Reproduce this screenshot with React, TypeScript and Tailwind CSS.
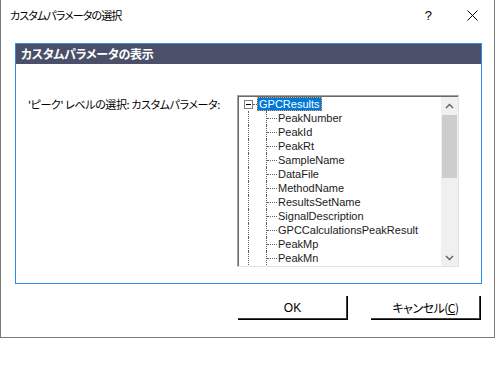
import React from "react";

const jp = "font-['Noto_Sans_CJK_JP',sans-serif] [font-feature-settings:'palt']";
const latin = "font-['Liberation_Sans','Noto_Sans_CJK_JP',sans-serif]";

const children = [
  "PeakNumber",
  "PeakId",
  "PeakRt",
  "SampleName",
  "DataFile",
  "MethodName",
  "ResultsSetName",
  "SignalDescription",
  "GPCCalculationsPeakResult",
  "PeakMp",
  "PeakMn",
];

function Chevron({ up }: { up?: boolean }) {
  return (
    <svg width="9" height="6" viewBox="0 0 9 6">
      <path
        d={up ? "M1 5 L4.5 1.5 L8 5" : "M1 1 L4.5 4.5 L8 1"}
        fill="none"
        stroke="#606060"
        strokeWidth="1.4"
      />
    </svg>
  );
}

export default function App() {
  return (
    <div className="w-[497px] h-[366px] bg-white overflow-hidden">
      <div className="w-[495px] h-[338px] flex flex-col border-l border-r border-b border-[#7a7a7a] bg-white">

        {/* Title bar */}
        <div className="h-[31px] flex items-center pl-[9px] shrink-0">
          <span className={`${jp} text-[11px] tracking-[-0.9px] text-black`}>カスタムパラメータの選択</span>
          <span className="ml-auto mr-[35px] font-['Liberation_Sans',sans-serif] text-[13px] text-black">?</span>
          <svg width="11" height="11" viewBox="0 0 11 11" className="mr-[16px]">
            <path d="M0.5 0.5 L10.5 10.5 M10.5 0.5 L0.5 10.5" stroke="#000" strokeWidth="1" />
          </svg>
        </div>

        {/* Group */}
        <div className="pl-[14px] pt-[12px]">
          <div className="w-[467px] h-[241px] border border-[#2a8cf0] flex flex-col">
            <div className="h-[20px] bg-[#4a5069] flex items-center pl-[5px]">
              <span className={`${jp} text-[12px] tracking-[-0.3px] font-bold text-white`}>カスタムパラメータの表示</span>
            </div>

            <div className="flex mt-[31px]">
              <div className={`${jp} w-[221px] pl-[12px] pt-[1px] text-[11px] tracking-[-0.4px] whitespace-nowrap text-black`}>
                'ピーク' レベルの選択: カスタムパラメータ:
              </div>

              {/* Tree view */}
              <div className="w-[222px] h-[172px] border-t border-l border-[#a0a0a0] border-b border-r border-b-[#e3e3e3] border-r-[#e3e3e3]">
                <div className="w-full h-full border-t border-l border-[#696969] flex">
                  <div className={`${latin} flex-1 flex flex-col text-[11px] text-[#1a1a1a] overflow-hidden`}>
                    <div className="h-[14px] flex items-center pl-[5px] shrink-0">
                      <div className="w-[9px] h-[9px] border border-[#808080] flex items-center justify-center">
                        <div className="w-[5px] h-px bg-black" />
                      </div>
                      <div className="w-[4px] border-t border-dotted border-[#606060]" />
                      <div className="h-[14px] flex items-center px-[1px] bg-[#0078d7] text-white border border-dotted border-[#ff9a3c]">
                        GPCResults
                      </div>
                    </div>
                    {children.map((c) => (
                      <div key={c} className="h-[14px] flex pl-[9px] shrink-0">
                        <div className="w-[18px] self-stretch border-l border-dotted border-[#606060]" />
                        <div className="w-[11px] self-stretch flex items-center border-l border-dotted border-[#606060]">
                          <div className="w-full border-t border-dotted border-[#606060]" />
                        </div>
                        <div className="pl-[1px] flex items-center leading-none whitespace-nowrap">{c}</div>
                      </div>
                    ))}
                  </div>

                  {/* Scrollbar */}
                  <div className="w-[17px] bg-[#f0f0f0] flex flex-col items-center">
                    <div className="h-[17px] flex items-center justify-center">
                      <Chevron up />
                    </div>
                    <div className="w-[15px] h-[63px] bg-[#cdcdcd] mt-[1px]" />
                    <div className="flex-1" />
                    <div className="h-[17px] flex items-center justify-center">
                      <Chevron />
                    </div>
                  </div>
                </div>
              </div>
            </div>
          </div>
        </div>

        {/* Buttons */}
        <div className="flex pl-[237px] pt-[12px] gap-[23px]">
          <button className={`${latin} w-[110px] h-[24px] bg-white border-r border-b border-black shadow-[inset_-1px_-1px_0_#404040] text-[12px] text-black`}>
            OK
          </button>
          <button className={`${jp} w-[110px] h-[24px] bg-white border-r border-b border-black shadow-[inset_-1px_-1px_0_#404040] text-[12px] tracking-[-0.5px] text-black`}>
            キャンセル(<span className="underline">C</span>)
          </button>
        </div>
      </div>
    </div>
  );
}
